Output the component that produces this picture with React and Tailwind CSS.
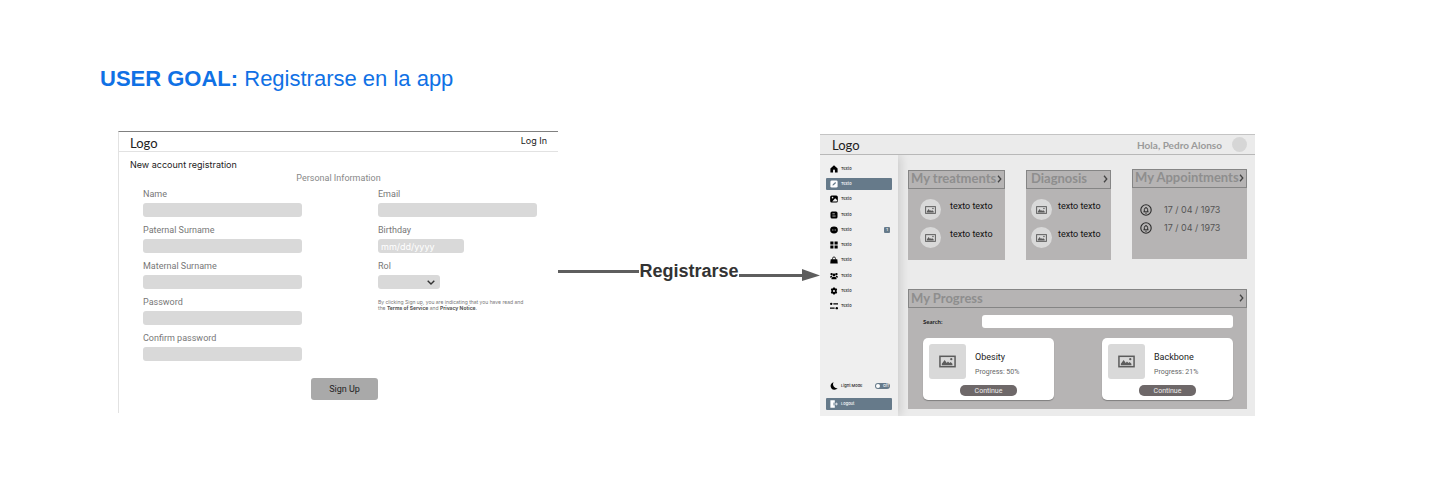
import React from "react";

function ImageIcon({ className }) {
  return (
    <svg viewBox="0 0 18 13" className={className} aria-hidden="true">
      <rect x="1" y="1" width="16" height="11" fill="none" stroke="#5c5c5c" strokeWidth="1.6" />
      <path d="M3 10.5V9l3-4 2.2 3 1.3-1.6 1.6 1.6 1.2-1 1.9 2v1.500z" fill="#5c5c5c" />
      <circle cx="13" cy="4" r="1.2" fill="#5c5c5c" />
    </svg>
  );
}

function Chevron({ className }) {
  return (
    <svg viewBox="0 0 5 8" className={className} aria-hidden="true">
      <path d="M1 0.800L3.800 4L1 7.200" fill="none" stroke="currentColor" strokeWidth="1.300" />
    </svg>
  );
}

function BellIcon() {
  return (
    <svg viewBox="0 0 12 12" className="size-3 shrink-0" fill="none" stroke="#2b2b2b" aria-hidden="true">
      <circle cx="6" cy="6" r="5.200" strokeWidth="1.100" />
      <path d="M3.500 7.800h5M4.300 7.800V5.700a1.700 1.900 0 0 1 3.400 0v2.100M6 3v0.800M5.300 9.200h1.400" strokeWidth="1" />
    </svg>
  );
}

const icons = {
  home: <path d="M5 0.300L0.500 4.500V9.500H3.800V6.800a1.200 1.200 0 0 1 2.400 0V9.500H9.500V4.500z" />,
  edit: (
    <>
      <rect x="0.500" y="0.500" width="9" height="9" rx="1.800" />
      <path d="M3 7l0.500-1.800L6.600 2.600l1 1L4.600 6.600z" fill="#667a8a" />
    </>
  ),
  picture: (
    <>
      <rect x="0.200" y="0.500" width="9.600" height="9" rx="2" />
      <circle cx="3.200" cy="3.300" r="1" fill="#efefef" />
      <path d="M2.800 8.200L6.500 4.200L9 6.600V7.500L8 8.200z" fill="#efefef" />
    </>
  ),
  note: (
    <>
      <rect x="0.600" y="0.600" width="8.800" height="8.800" rx="2" />
      <path d="M3 3.500h3M3 6.300h4" stroke="#efefef" strokeWidth="0.900" />
    </>
  ),
  chat: (
    <>
      <ellipse cx="5" cy="5" rx="4.800" ry="4.300" />
      <path d="M2.500 5h1M4.500 5h1M6.500 5h1" stroke="#efefef" strokeWidth="1" />
    </>
  ),
  grid: <path d="M0.400 0.600h3.900v3.700H0.400zM5.700 0.600h3.900v3.700H5.700zM0.400 5.700h3.900v3.700H0.400zM5.700 5.700h3.900v3.700H5.700z" />,
  bag: (
    <>
      <path d="M0.900 4h8.200L9.700 9.300H0.300z" />
      <path d="M3.200 4.500V3a1.800 1.800 0 0 1 3.600 0v1.500" fill="none" stroke="currentColor" strokeWidth="1" />
    </>
  ),
  people: (
    <>
      <circle cx="5" cy="3.600" r="1.800" />
      <circle cx="2" cy="2.600" r="1.500" />
      <circle cx="8" cy="2.600" r="1.500" />
      <path d="M1.800 9a3.200 3 0 0 1 6.400 0zM0 6.800a2 2 0 0 1 3-1.800l-1 1.800zM10 6.800a2 2 0 0 0-3-1.800l1 1.800z" />
    </>
  ),
  gear: (
    <>
      <path d="M4 0.500h2l0.400 1.300 1.400-0.300 1.200 1.600L8.300 4.300v1.400l0.700 1.200-1.200 1.600-1.400-0.300L6 9.500H4l-0.400-1.300-1.400 0.300L1 6.900l0.700-1.200V4.300L1 3.100l1.200-1.600 1.400 0.300z" />
      <circle cx="5" cy="5" r="1.300" fill="#efefef" />
    </>
  ),
  sliders: (
    <>
      <circle cx="1.500" cy="2.300" r="1.500" />
      <circle cx="8.500" cy="7.700" r="1.500" />
      <path d="M4.200 2.300H10M0 7.700h5.800" stroke="currentColor" strokeWidth="1.500" />
    </>
  ),
  moon: <path d="M4.600 0.300A4.800 4.800 0 1 0 9.600 7.600A4.800 4.800 0 0 1 4.600 0.300z" />,
  logout: (
    <>
      <path d="M0.500 0.300h5.500v3.200H4v3h2v3.200H0.500z" />
      <path d="M3.500 5h5.500M7.500 3.400L9.200 5L7.500 6.600" fill="none" stroke="currentColor" strokeWidth="1" />
    </>
  ),
};

function MenuIcon({ name }) {
  return (
    <svg viewBox="0 0 10 10" className="size-2 shrink-0" fill="currentColor" aria-hidden="true">
      {icons[name]}
    </svg>
  );
}

const menu = ["home", "edit", "picture", "note", "chat", "grid", "bag", "people", "gear", "sliders"];

function Field({ id, label, type = "text", width = "w-full", placeholder }) {
  return (
    <div className="flex h-9 flex-col">
      <label htmlFor={id} className="h-[15px] font-['Roboto',sans-serif] text-[9px] leading-3 text-[#777]">{label}</label>
      <input
        id={id}
        type={type}
        placeholder={placeholder}
        className={`${width} h-[14px] rounded-[3px] bg-[#d9d9d9] px-[3px] text-[9px] leading-3 text-[#333] outline-none placeholder:text-white`}
      />
    </div>
  );
}

function SignUpScreen() {
  return (
    <section className="h-[282px] border-t border-l border-t-[#808080] border-l-[#e2e2e2] bg-white font-['Inter',sans-serif]">
      <header className="flex h-5 items-start justify-between border-b border-[#e2e2e2] pt-[3px] pr-[11px] pl-[11px]">
        <span className="font-['Lato',sans-serif] text-[13px] leading-4 text-[#222]">Logo</span>
        <a href="#login" className="text-[9px] leading-3 text-[#222]">Log In</a>
      </header>
      <form onSubmit={(e) => e.preventDefault()}>
        <h2 className="pt-[7px] pl-[11px] text-[9px] leading-3 text-[#222]">New account registration</h2>
        <p className="pt-[1px] text-center font-['Roboto',sans-serif] text-[9px] leading-3 text-[#888]">Personal Information</p>
        <div className="mt-1 grid grid-cols-2 gap-x-[76px] pr-[21px] pl-6">
          <div>
            <Field id="name" label="Name" />
            <Field id="paternal" label="Paternal Surname" />
            <Field id="maternal" label="Maternal Surname" />
            <Field id="password" label="Password" type="password" />
            <Field id="confirm" label="Confirm password" type="password" />
          </div>
          <div>
            <Field id="email" label="Email" type="email" />
            <Field id="birthday" label="Birthday" width="w-[86px]" placeholder="mm/dd/yyyy" />
            <div className="flex h-9 flex-col">
              <label htmlFor="rol" className="h-[15px] font-['Roboto',sans-serif] text-[9px] leading-3 text-[#777]">Rol</label>
              <div className="grid w-[62px] items-center">
                <select id="rol" className="col-start-1 row-start-1 h-[14px] w-full appearance-none rounded-[3px] bg-[#d9d9d9] text-[9px] outline-none">
                  <option value=""></option>
                </select>
                <svg viewBox="0 0 8 5" className="pointer-events-none col-start-1 row-start-1 mr-[5px] h-[5px] w-2 justify-self-end" aria-hidden="true">
                  <path d="M0.700 0.700L4 3.900L7.300 0.700" fill="none" stroke="#333" strokeWidth="1.400" />
                </svg>
              </div>
            </div>
            <p className="mt-[3px] text-[5px] leading-[6px] whitespace-nowrap text-[#777]">
              By clicking Sign up, you are indicating that you have read and
              <br />
              the <b className="text-[#555]">Terms of Service</b> and <b className="text-[#555]">Privacy Notice</b>.
            </p>
          </div>
        </div>
        <div className="mt-[10px] flex justify-center pl-3">
          <button type="submit" className="h-[22px] w-[67px] rounded-[3px] bg-[#a9a9a9] font-['Roboto',sans-serif] text-[9px] leading-3 text-[#222]">Sign Up</button>
        </div>
      </form>
    </section>
  );
}

function Connector() {
  return (
    <div className="flex items-start pt-[130px] font-['Liberation_Sans',Arial,sans-serif]">
      <div className="mt-[9px] h-[3px] flex-1 bg-[#5e5e5e]" />
      <span className="text-[18px] leading-5 font-bold text-[#333]">Registrarse</span>
      <div className="flex flex-1 items-start">
        <div className="mt-[13px] h-[3px] flex-1 bg-[#5e5e5e]" />
        <svg viewBox="0 0 18 12" className="mt-2 h-3 w-[18px] shrink-0" aria-hidden="true">
          <path d="M0 0L18 6.500L0 12z" fill="#5e5e5e" />
        </svg>
      </div>
    </div>
  );
}

function Sidebar() {
  return (
    <nav className="flex w-[78px] shrink-0 flex-col bg-[#efefef] px-[6px] pt-2 pb-[6px] text-[4px] leading-[6px] font-medium text-[#222] shadow-[2px_0_10px_rgba(0,0,0,0.15)]">
      <ul className="flex h-[149px] flex-col justify-between">
        {menu.map((name) => (
          <li key={name}>
            <a
              href={`#${name}`}
              className={`flex h-3 items-center gap-[3px] rounded-[1px] pl-1 ${name === "edit" ? "bg-[#667a8a] text-white" : ""}`}
            >
              <span className={`flex ${name === "edit" ? "text-white" : "text-black"}`}><MenuIcon name={name} /></span>
              <span>Texto</span>
              {name === "chat" && (
                <span className="mr-[2px] ml-auto size-[6px] rounded-[1px] bg-[#667a8a] text-center text-white">1</span>
              )}
            </a>
          </li>
        ))}
      </ul>
      <label className="mt-auto mb-[6px] flex h-3 items-center gap-[3px] pl-1">
        <span className="flex text-black"><MenuIcon name="moon" /></span>
        <span>Light Mode</span>
        <input type="checkbox" className="sr-only" />
        <span className="mr-[2px] ml-auto flex h-[6px] w-[15px] items-center justify-between rounded-full bg-[#667a8a] px-[1px] text-white">
          <span className="size-1 rounded-full bg-white" />
          <span>Off</span>
        </span>
      </label>
      <button type="button" className="flex h-3 items-center gap-[3px] rounded-[1px] bg-[#667a8a] pl-1 text-white">
        <MenuIcon name="logout" />
        <span>Logout</span>
      </button>
    </nav>
  );
}

function PanelHeader({ title, titleClass = "pt-0" }) {
  return (
    <header className="flex h-[19px] items-start justify-between border border-[#858585] px-[2px]">
      <h3 className={`font-['Lato',sans-serif] text-[13px] font-bold whitespace-nowrap text-[#8e8e8e] ${titleClass}`}>{title}</h3>
      <Chevron className="mt-1 h-2 w-[5px] shrink-0 text-[#444]" />
    </header>
  );
}

function TextList({ title, titleClass, inset, gap }) {
  return (
    <section className="h-[90px] bg-[#b6b4b4]">
      <PanelHeader title={title} titleClass={titleClass} />
      <ul className={`flex flex-col gap-[7px] pt-[10px] ${inset}`}>
        {[0, 1].map((i) => (
          <li key={i} className={`flex items-start ${gap}`}>
            <span className="flex size-[21px] shrink-0 items-center justify-center rounded-full bg-[#d9d9d9]">
              <ImageIcon className="h-2 w-[11px]" />
            </span>
            <span className="pt-[1px] font-['Roboto',sans-serif] text-[9px] leading-3 whitespace-nowrap text-[#111]">texto texto</span>
          </li>
        ))}
      </ul>
    </section>
  );
}

function ProgressCard({ name, progress }) {
  return (
    <article className="flex h-[62px] w-[131px] flex-col rounded-[5px] bg-white px-[6px] pt-[6px] font-['Roboto',sans-serif] shadow-[0_1px_1px_rgba(0,0,0,0.3)]">
      <div className="flex">
        <span className="flex h-[35px] w-[37px] shrink-0 items-center justify-center rounded-[3px] bg-[#d9d9d9]">
          <ImageIcon className="h-[13px] w-[17px]" />
        </span>
        <div className="pt-[7px] pl-[9px]">
          <h4 className="text-[9px] leading-3 text-[#222]">{name}</h4>
          <p className="pt-1 text-[7px] leading-[10px] whitespace-nowrap text-[#666]">Progress: {progress}%</p>
        </div>
      </div>
      <button type="button" className="mt-[6px] h-[11px] w-[57px] self-center rounded-[5px] bg-[#6e6869] text-[7px] leading-[10px] text-[#eee]">Continue</button>
    </article>
  );
}

function DashboardScreen() {
  return (
    <section className="mt-[3px] flex h-[282px] flex-col border-t border-[#c4c4c4] bg-[#ebebeb] font-['Inter',sans-serif]">
      <header className="flex h-5 shrink-0 items-center border-b border-[#b8b8b8] pr-2 pl-3 font-['Lato',sans-serif]">
        <span className="text-[13px] leading-4 text-[#222]">Logo</span>
        <span className="ml-auto text-[10px] leading-4 font-bold text-[#9a9a9a]">Hola, Pedro Alonso</span>
        <span className="ml-[10px] size-[15px] rounded-full bg-[#d6d6d6]" />
      </header>
      <div className="flex flex-1 overflow-hidden">
        <Sidebar />
        <main className="min-w-0 flex-1 pt-[14px] pr-2 pl-[10px]">
          <div className="grid grid-cols-[minmax(0,97fr)_minmax(0,85fr)_minmax(0,115fr)] gap-[21px]">
            <div className="pt-px">
              <TextList title="My treatments" titleClass="leading-[14px]" inset="pl-3" gap="gap-[9px]" />
            </div>
            <div className="pt-px">
              <TextList title="Diagnosis" titleClass="pl-[2px] leading-[14px]" inset="pl-[5px]" gap="gap-[6px]" />
            </div>
            <section className="h-[90px] bg-[#b6b4b4]">
              <PanelHeader title="My Appointments" titleClass="leading-[14px]" />
              <ul className="flex flex-col gap-[6px] pt-4 pl-2">
                {[0, 1].map((i) => (
                  <li key={i} className="flex h-3 items-center gap-3">
                    <BellIcon />
                    <time className="text-[9px] leading-3 whitespace-nowrap text-[#555]">17 / 04 / 1973</time>
                  </li>
                ))}
              </ul>
            </section>
          </div>
          <section className="mt-[29px] h-[120px] bg-[#b6b4b4]">
            <PanelHeader title="My Progress" titleClass="leading-4" />
            <div className="flex items-center pt-[7px] pr-[14px] pl-[15px]">
              <label htmlFor="search" className="w-[59px] font-['Lato',sans-serif] text-[6px] leading-2 font-bold text-[#222]">Search:</label>
              <input id="search" type="search" className="h-[13px] min-w-0 flex-1 rounded-[3px] bg-white px-1 text-[7px] outline-none" />
            </div>
            <div className="flex justify-between pt-[10px] pr-[14px] pl-[15px]">
              <ProgressCard name="Obesity" progress={50} />
              <ProgressCard name="Backbone" progress={21} />
            </div>
          </section>
        </main>
      </div>
    </section>
  );
}

export default function App() {
  return (
    <div className="min-h-screen bg-white pt-[66px] pb-16">
      <h1 className="pl-[100px] font-['Liberation_Sans',Arial,sans-serif] text-[22px] leading-[25px] text-[#1071e5]">
        <b>USER GOAL:</b> Registrarse en la app
      </h1>
      <div className="mt-10 grid grid-cols-[minmax(0,440fr)_minmax(0,262fr)_minmax(0,435fr)] items-start pr-[185px] pl-[118px]">
        <SignUpScreen />
        <Connector />
        <DashboardScreen />
      </div>
    </div>
  );
}
